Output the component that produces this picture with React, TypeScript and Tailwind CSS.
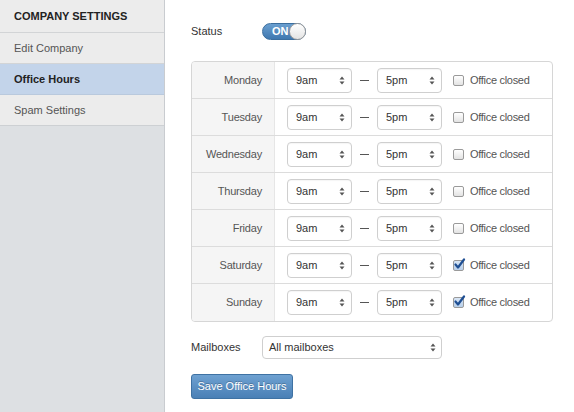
import React from "react";

const DAYS = [
  { name: "Monday", closed: false },
  { name: "Tuesday", closed: false },
  { name: "Wednesday", closed: false },
  { name: "Thursday", closed: false },
  { name: "Friday", closed: false },
  { name: "Saturday", closed: true },
  { name: "Sunday", closed: true },
];

function Arrows() {
  return (
    <svg width="6" height="9" viewBox="0 0 6 9" className="shrink-0">
      <path d="M3 0.5 L5.5 3.5 H0.5 Z" fill="#555" />
      <path d="M3 8.5 L5.5 5.5 H0.5 Z" fill="#555" />
    </svg>
  );
}

function Select({ value }: { value: string }) {
  return (
    <div className="flex h-[25px] w-[65px] items-center justify-between rounded-[4px] border border-[#cfcfcf] bg-white pl-[8px] pr-[6px] text-[11px] text-[#333] shadow-[inset_0_1px_1px_rgba(0,0,0,0.04)]">
      <span>{value}</span>
      <Arrows />
    </div>
  );
}

function Checkbox({ checked }: { checked: boolean }) {
  return (
    <div
      className={`relative h-[11px] w-[11px] rounded-[2px] border border-[#9a9a9a] bg-gradient-to-b ${
        checked ? "from-[#d7e5f5] to-[#b8cfea]" : "from-white to-[#e3e3e3]"
      }`}
    >
      {checked && (
        <svg width="13" height="13" viewBox="0 0 13 13" className="absolute -left-[1px] -top-[3px]">
          <path d="M2.5 6.5 L5 9.5 L11 1.5" fill="none" stroke="#1f4f93" strokeWidth="2.2" strokeLinecap="round" strokeLinejoin="round" />
        </svg>
      )}
    </div>
  );
}

export default function App() {
  return (
    <div className="flex h-[412px] w-[574px] overflow-hidden bg-white font-['Liberation_Sans',Arial,sans-serif] text-[11px] text-[#333]">
      <aside className="flex w-[165px] shrink-0 flex-col border-r border-[#c9ccd0] bg-[#dde0e3]">
        <div className="flex h-[33px] items-center border-b border-[#d2d4d6] bg-[#ececec] pl-[14px] text-[11px] font-bold text-[#222]">
          COMPANY SETTINGS
        </div>
        <div className="flex h-[31px] items-center border-b border-[#d2d4d6] bg-[#ececec] pl-[14px] text-[#555]">
          Edit Company
        </div>
        <div className="flex h-[31px] items-center border-b border-[#b9c9dd] bg-[#c3d4ea] pl-[14px] font-bold text-[#222]">
          Office Hours
        </div>
        <div className="flex h-[31px] items-center border-b border-[#cdd0d3] bg-[#ececec] pl-[14px] text-[#555]">
          Spam Settings
        </div>
      </aside>

      <main className="flex-1 pl-[26px] pr-[21px] pt-[23px]">
        <div className="flex h-[17px] items-center">
          <span className="w-[71px]">Status</span>
          <div className="relative flex h-[17px] w-[44px] items-center rounded-full border border-[#3b6e9e] bg-gradient-to-b from-[#6a9fd0] to-[#3f78b0]">
            <span className="pl-[9px] text-[11px] font-bold text-white">ON</span>
            <div className="absolute -right-[1px] -top-[1px] h-[17px] w-[17px] rounded-full border border-[#9a9a9a] bg-gradient-to-b from-white to-[#e4e4e4]" />
          </div>
        </div>

        <div className="mt-[21px] overflow-hidden rounded-[4px] border border-[#d6d6d6]">
          {DAYS.map((d, i) => (
            <div
              key={d.name}
              className={`flex h-[37px] items-stretch ${i < DAYS.length - 1 ? "border-b border-[#dcdcdc]" : ""}`}
            >
              <div className="flex w-[82px] items-center justify-end bg-[#f5f5f5] pr-[12px] tracking-[-0.2px] text-[#555]">
                {d.name}
              </div>
              <div className="flex flex-1 items-center border-l border-[#e6e6e6] pl-[12px]">
                <Select value="9am" />
                <div className="flex w-[25px] justify-center">
                  <div className="h-px w-[9px] bg-[#555]" />
                </div>
                <Select value="5pm" />
                <div className="ml-[11px] mr-[6px]">
                  <Checkbox checked={d.closed} />
                </div>
                <span className="tracking-[-0.3px] text-[#555]">Office closed</span>
              </div>
            </div>
          ))}
        </div>

        <div className="mt-[14px] flex items-center">
          <span className="w-[71px]">Mailboxes</span>
          <div className="flex h-[23px] w-[180px] items-center justify-between rounded-[4px] border border-[#cfcfcf] bg-white pl-[6px] pr-[5px]">
            <span>All mailboxes</span>
            <Arrows />
          </div>
        </div>

        <button className="mt-[15px] flex h-[25px] w-[102px] items-center justify-center rounded-[3px] border border-[#3f72a3] bg-gradient-to-b from-[#6ea1d1] to-[#4a80b6] text-[11px] text-white [text-shadow:0_-1px_0_rgba(0,0,0,0.25)]">
          Save Office Hours
        </button>
      </main>
    </div>
  );
}
